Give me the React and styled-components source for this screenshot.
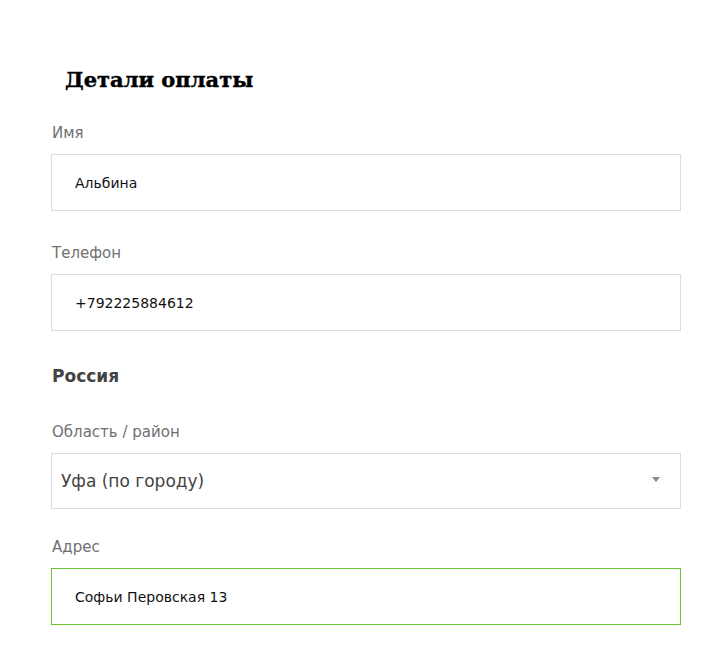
import styled, { createGlobalStyle } from 'styled-components';

const GlobalStyle = createGlobalStyle`
  html, body {
    margin: 0;
    padding: 0;
    background: #ffffff;
  }
  body {
    font-family: "DejaVu Sans", "Liberation Sans", sans-serif;
  }
`;

const Form = styled.form`
  width: 630px;
  padding: 62px 0 0 51px;
`;

const Title = styled.h3`
  margin: 0 0 23px;
  padding-left: 14px;
  font-family: "DejaVu Serif", "Liberation Serif", serif;
  font-weight: 900;
  font-size: 21px;
  line-height: 36px;
  color: #000000;
  -webkit-text-stroke: 0.4px #000000;
`;

const Field = styled.div`
  margin-bottom: ${(p) => p.$gap ?? 30}px;
`;

const Label = styled.label`
  display: block;
  margin-bottom: 9px;
  padding-left: 1px;
  font-size: 15px;
  line-height: 24px;
  color: #707070;
`;

const Input = styled.input`
  display: block;
  box-sizing: border-box;
  width: 100%;
  height: 57px;
  margin: 0;
  padding: 0 23px;
  border: 1px solid ${(p) => (p.$focused ? '#6cc12e' : '#dddddd')};
  border-radius: 0;
  outline: none;
  background: #ffffff;
  font-family: inherit;
  font-size: 14px;
  color: #111111;
`;

const Country = styled.strong`
  display: block;
  margin: 0 0 29px;
  padding-left: 1px;
  font-size: 17px;
  line-height: 30px;
  font-weight: bold;
  color: #444444;
`;

const Select = styled.div`
  display: flex;
  align-items: center;
  justify-content: space-between;
  box-sizing: border-box;
  height: 56px;
  padding: 0 20px 0 9px;
  border: 1px solid #dddddd;
  font-size: 17px;
  color: #444444;
`;

const Arrow = styled.b`
  width: 0;
  height: 0;
  margin-top: -4px;
  border-style: solid;
  border-width: 5px 4px 0 4px;
  border-color: #888888 transparent transparent transparent;
`;

export default function App() {
  return (
    <>
      <GlobalStyle />
      <Form>
        <Title>Детали оплаты</Title>
        <Field>
          <Label>Имя</Label>
          <Input defaultValue="Альбина" />
        </Field>
        <Field>
          <Label>Телефон</Label>
          <Input defaultValue="+792225884612" />
        </Field>
        <Country>Россия</Country>
        <Field $gap={26}>
          <Label>Область / район</Label>
          <Select>
            <span>Уфа (по городу)</span>
            <Arrow />
          </Select>
        </Field>
        <Field>
          <Label>Адрес</Label>
          <Input $focused defaultValue="Софьи Перовская 13" />
        </Field>
      </Form>
    </>
  );
}
